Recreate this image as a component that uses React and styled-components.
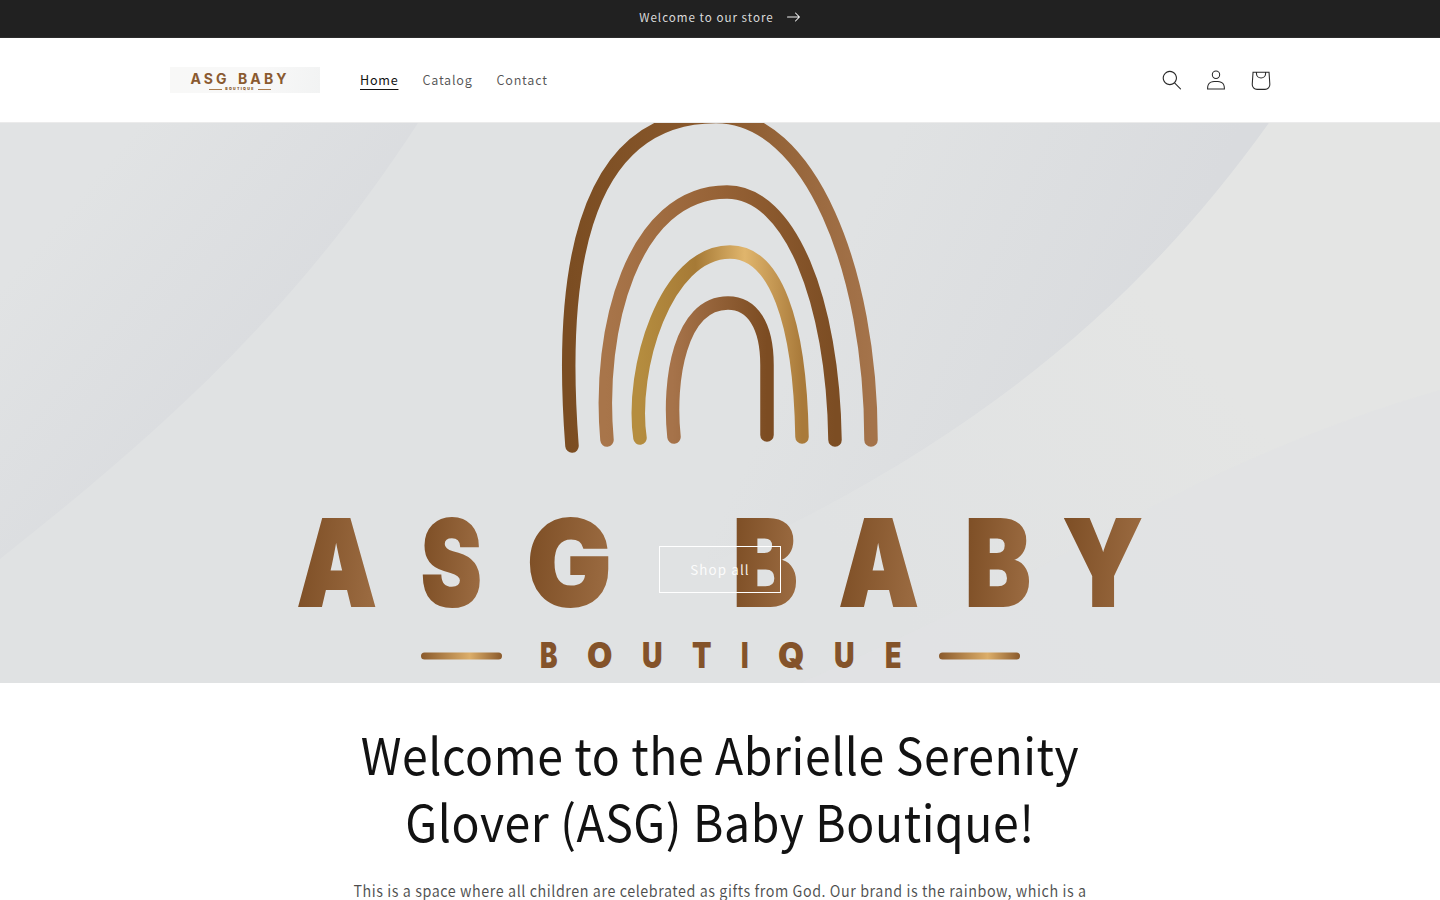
import React from "react"
import styled, { createGlobalStyle } from "styled-components"

const fontStack = `"Noto Sans CJK JP", "Noto Sans", sans-serif`

const GlobalStyle = createGlobalStyle`
  html, body {
    margin: 0;
    padding: 0;
    background: #fff;
  }
  body {
    font-family: ${fontStack};
    color: #121212;
    letter-spacing: 0.6px;
  }
  * {
    box-sizing: border-box;
  }
`

const AnnouncementBar = styled.div`
  display: flex;
  justify-content: center;
  align-items: center;
  gap: 12px;
  height: 38px;
  padding-bottom: 3px;
  background: #212121;
  border-bottom: 1px solid #2c2c2c;
  color: rgba(255, 255, 255, 0.85);
  font-size: 11.6px;
  letter-spacing: 1px;
`

const ArrowIcon = styled.svg`
  width: 15px;
  height: 10px;
  fill: #f2f2f2;
`

const Header = styled.header`
  height: 85px;
  border-bottom: 1px solid #ebebeb;
`

const HeaderInner = styled.div`
  display: flex;
  align-items: center;
  max-width: 1200px;
  height: 100%;
  margin: 0 auto;
  padding: 0 38px 0 50px;
`

const LogoBox = styled.a`
  display: flex;
  flex-direction: column;
  align-items: center;
  width: 150px;
  height: 26px;
  padding-right: 10px;
  background: linear-gradient(100deg, #f8f8f7 0%, #f8f8f8 60%, #f2f3f3 100%);
  color: #8a5a30;
  line-height: 1;
`

const LogoName = styled.span`
  margin-top: 5px;
  font-family: "Inter", sans-serif;
  font-size: 14px;
  font-weight: 700;
  letter-spacing: 3.1px;
  word-spacing: 2px;
`

const LogoTag = styled.span`
  display: flex;
  align-items: center;
  gap: 3px;
  margin-top: 2px;
  font-family: "Inter", sans-serif;
  font-size: 3.6px;
  font-weight: 900;
  letter-spacing: 1.3px;

  &::before,
  &::after {
    content: "";
    width: 13px;
    height: 1px;
    background: #a87a4c;
  }
`

const Nav = styled.nav`
  display: flex;
  margin-left: 28px;
  flex: 1;
`

const NavLink = styled.a`
  padding: 0 12px;
  font-size: 12.6px;
  letter-spacing: 0.75px;
  line-height: 24px;
  color: ${(p) => (p.$active ? "#121212" : "rgba(18, 18, 18, 0.72)")};

  span {
    text-decoration: ${(p) => (p.$active ? "underline" : "none")};
    text-underline-offset: 4px;
  }
`

const IconRow = styled.div`
  display: flex;
`

const IconButton = styled.a`
  display: flex;
  justify-content: center;
  align-items: center;
  width: 44px;
  height: 44px;

  svg {
    flex: none;
    width: ${(p) => p.$size || 20}px;
    height: ${(p) => p.$size || 20}px;
    fill: #121212;
    opacity: 0.9;
  }
`

const Hero = styled.section`
  display: grid;
  height: 560px;
  overflow: hidden;
`

const HeroArt = styled.svg`
  grid-area: 1 / 1;
  display: block;
  width: 100%;
  height: 560px;
`

const ShopButton = styled.a`
  grid-area: 1 / 1;
  align-self: end;
  justify-self: center;
  display: flex;
  justify-content: center;
  align-items: center;
  width: 122px;
  height: 47px;
  margin-bottom: 90px;
  padding-bottom: 2px;
  border: 1px solid #fff;
  color: rgba(255, 255, 255, 0.9);
  font-size: 13.4px;
  letter-spacing: 1.1px;
  position: relative;
`

const Intro = styled.section`
  max-width: 860px;
  margin: 0 auto;
  padding: 37px 0 60px;
  text-align: center;
`

/* the store's font is narrower than anything installed, so squeeze a larger size */
const Title = styled.h1`
  margin: 0;
  font-size: 50.4px;
  font-weight: 400;
  line-height: 67px;
  transform: scaleX(0.92);
`

const Body = styled.p`
  margin: 22px 0 0;
  font-size: 15.4px;
  line-height: 29px;
  color: rgba(18, 18, 18, 0.75);
  transform: scaleX(0.93);
`

const bigLetters = [
  { c: "A", x: 297, w: 80 },
  { c: "S", x: 421, w: 61 },
  { c: "G", x: 527, w: 85 },
  { c: "B", x: 733, w: 65 },
  { c: "A", x: 839, w: 80 },
  { c: "B", x: 965, w: 66 },
  { c: "Y", x: 1063, w: 80 },
]

const smallLetters = [
  { c: "B", x: 540, w: 18 },
  { c: "O", x: 587, w: 26 },
  { c: "U", x: 642, w: 21 },
  { c: "T", x: 692, w: 20 },
  { c: "I", x: 741, w: 8 },
  { c: "Q", x: 778, w: 27 },
  { c: "U", x: 834, w: 21 },
  { c: "E", x: 885, w: 17 },
]

const arches = [
  { d: "M572 446C560 290 575 116.5 716 116.5C810 116.5 871 270 871 440", s: "url(#arch1)" },
  { d: "M607 440C597 330 632 192 727 192C790 192 833 300 835 440", s: "url(#arch2)" },
  { d: "M640 438C630 370 665 252 730 252C775 252 800 320 802 437", s: "url(#arch3)" },
  { d: "M674 437C668 380 680 303 728 303C752 303 767 325 767 365L767 435", s: "url(#arch4)" },
]

const HeroArtwork = () => (
  <HeroArt viewBox="0 123 1440 560" preserveAspectRatio="none">
    <defs>
      <linearGradient id="bladeLeft" gradientUnits="userSpaceOnUse" x1="100" y1="170" x2="290" y2="330">
        <stop offset="0" stopColor="#e1e3e4" />
        <stop offset="1" stopColor="#dadcdf" />
      </linearGradient>
      <linearGradient id="bladeRight" gradientUnits="userSpaceOnUse" x1="900" y1="130" x2="1180" y2="260">
        <stop offset="0" stopColor="#e0e2e3" />
        <stop offset="1" stopColor="#d9dbde" />
      </linearGradient>
      <linearGradient id="lightRight" gradientUnits="userSpaceOnUse" x1="1150" y1="300" x2="850" y2="560">
        <stop offset="0" stopColor="#e4e5e4" />
        <stop offset="1" stopColor="#e0e2e3" />
      </linearGradient>
      <linearGradient id="arch1" x1="0" y1="0" x2="1" y2="0">
        <stop offset="0" stopColor="#7b4d22" />
        <stop offset="0.5" stopColor="#8b5a2e" />
        <stop offset="1" stopColor="#a4734a" />
      </linearGradient>
      <linearGradient id="arch2" x1="0" y1="0" x2="1" y2="0">
        <stop offset="0" stopColor="#a8754a" />
        <stop offset="0.5" stopColor="#966236" />
        <stop offset="1" stopColor="#7c4d23" />
      </linearGradient>
      <linearGradient id="arch3" x1="0" y1="0" x2="1" y2="0">
        <stop offset="0" stopColor="#b58d3f" />
        <stop offset="0.35" stopColor="#a67a36" />
        <stop offset="0.65" stopColor="#e0b56c" />
        <stop offset="1" stopColor="#a97a3a" />
      </linearGradient>
      <linearGradient id="arch4" x1="0" y1="0" x2="1" y2="0">
        <stop offset="0" stopColor="#a6734a" />
        <stop offset="1" stopColor="#7c4c22" />
      </linearGradient>
      <linearGradient id="letterFill" x1="0" y1="0" x2="1" y2="0.15">
        <stop offset="0" stopColor="#7c4d24" />
        <stop offset="1" stopColor="#9a6a40" />
      </linearGradient>
      <linearGradient id="bar" x1="0" y1="0" x2="1" y2="0">
        <stop offset="0" stopColor="#8a5a2c" />
        <stop offset="0.6" stopColor="#dcae6a" />
        <stop offset="1" stopColor="#8a5a2c" />
      </linearGradient>
    </defs>

    <rect x="0" y="123" width="1440" height="560" fill="#e0e2e3" />
    <path d="M0 123H418C290 320 150 440 0 559Z" fill="url(#bladeLeft)" />
    <path d="M700 123H1269C1150 290 1000 420 780 530L700 570Z" fill="url(#bladeRight)" />
    <path d="M1269 123C1150 290 1000 420 780 530L600 683H1440V123Z" fill="url(#lightRight)" />
    <path d="M1440 390C1300 430 1180 490 1080 545C1000 590 900 640 800 683H1440Z" fill="#e1e3e4" opacity="0.7" />

    {arches.map((a) => (
      <path key={a.d} d={a.d} fill="none" stroke={a.s} strokeWidth="13.5" strokeLinecap="round" />
    ))}

    <g fontFamily="Inter, sans-serif" fontWeight="900" fontSize="119" fill="url(#letterFill)" stroke="url(#letterFill)" strokeWidth="2">
      {bigLetters.map((l) => (
        <text key={l.x} x={l.x} y="606" textLength={l.w} lengthAdjust="spacingAndGlyphs">
          {l.c}
        </text>
      ))}
    </g>
    <g fontFamily="Inter, sans-serif" fontWeight="900" fontSize="35" fill="#84532a">
      {smallLetters.map((l) => (
        <text key={l.x} x={l.x} y="668" textLength={l.w} lengthAdjust="spacingAndGlyphs">
          {l.c}
        </text>
      ))}
    </g>
    <rect x="421" y="652.5" width="81" height="7" rx="3.5" fill="url(#bar)" />
    <rect x="939" y="652.5" width="81" height="7" rx="3.5" fill="url(#bar)" />
  </HeroArt>
)

const App = () => {
  return (
    <>
      <GlobalStyle />
      <AnnouncementBar>
        <span>Welcome to our store</span>
        <ArrowIcon viewBox="0 0 14 10">
          <path d="M8.537.808a.5.5 0 01.817-.162l4 4a.5.5 0 010 .708l-4 4a.5.5 0 01-.817-.162.5.5 0 01.109-.546L11.793 5.5H1a.5.5 0 010-1h10.793L8.646 1.354a.5.5 0 01-.109-.546z" />
        </ArrowIcon>
      </AnnouncementBar>
      <Header>
        <HeaderInner>
          <LogoBox>
            <LogoName>ASG BABY</LogoName>
            <LogoTag>BOUTIQUE</LogoTag>
          </LogoBox>
          <Nav>
            <NavLink $active><span>Home</span></NavLink>
            <NavLink><span>Catalog</span></NavLink>
            <NavLink><span>Contact</span></NavLink>
          </Nav>
          <IconRow>
            <IconButton>
              <svg viewBox="0 0 18 19">
                <path fillRule="evenodd" d="M11.03 11.68A5.784 5.784 0 112.85 3.5a5.784 5.784 0 018.18 8.18zm.26 1.12a6.78 6.78 0 11.72-.7l5.4 5.4a.5.5 0 11-.71.7l-5.41-5.4z" />
              </svg>
            </IconButton>
            <IconButton>
              <svg viewBox="0 0 18 19">
                <path fillRule="evenodd" d="M6 4.5a3 3 0 116 0 3 3 0 01-6 0zm3-4a4 4 0 100 8 4 4 0 000-8zm5.58 12.15c1.12.82 1.83 2.24 1.91 4.85H1.51c.08-2.6.79-4.03 1.9-4.85C4.66 11.75 6.5 11.5 9 11.5s4.35.26 5.58 1.15zM9 10.5c-2.5 0-4.65.24-6.17 1.35C1.27 12.98.5 14.93.5 18v.5h17V18c0-3.07-.77-5.02-2.33-6.15-1.52-1.1-3.67-1.35-6.17-1.35z" />
              </svg>
            </IconButton>
            <IconButton $size={43}>
              <svg viewBox="0 0 40 40">
                <path fillRule="evenodd" d="m15.75 11.8h-3.16l-.77 11.6a5 5 0 0 0 4.99 5.34h7.38a5 5 0 0 0 4.99-5.33l-.78-11.61zm0 1h-2.22l-.71 10.67a4 4 0 0 0 3.99 4.27h7.38a4 4 0 0 0 4-4.27l-.72-10.67h-2.22v.63a4.75 4.75 0 1 1-9.5 0zm8.5 0h-7.5v.63a3.75 3.75 0 1 0 7.5 0z" />
              </svg>
            </IconButton>
          </IconRow>
        </HeaderInner>
      </Header>
      <Hero>
        <HeroArtwork />
        <ShopButton>Shop all</ShopButton>
      </Hero>
      <Intro>
        <Title>Welcome to the Abrielle Serenity Glover (ASG) Baby Boutique!</Title>
        <Body>This is a space where all children are celebrated as gifts from God. Our brand is the rainbow, which is a</Body>
      </Intro>
    </>
  )
}

export default App
